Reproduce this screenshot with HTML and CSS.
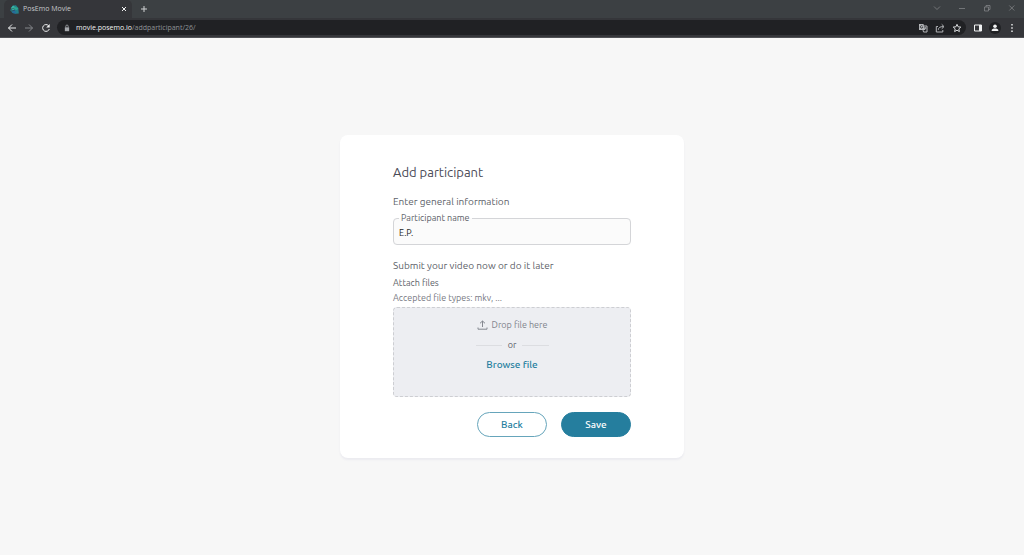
FILE: index.html
```html
<!DOCTYPE html>
<html lang="en">
<head>
<meta charset="utf-8">
<meta name="viewport" content="width=device-width, initial-scale=1">
<title>PosEmo Movie</title>
<link rel="stylesheet" href="styles.css">
</head>
<body>
<header class="browser">
  <div class="tabs">
    <div class="tab">
      <svg class="favicon" viewBox="0 0 9 9"><path d="M3 .5 6 .3 8.3 3 8.8 8.5 6 8.7 2.5 8 .3 5.5 1 3Z" fill="#22808b"/><path d="M3 .5 5 2 4.8 4.5 2.5 5.5 1 3Z" fill="#36b5a5"/><path d="M5 2 8.3 3 7 5 4.8 4.5Z" fill="#2ca88d"/><path d="M2.5 5.5 4.8 4.5 6 8.7 2.5 8Z" fill="#276b9b"/><path d="M.8 4.2 4.7 3M1 6.2 5 5" stroke="#35363a" stroke-width=".5"/></svg>
      <span class="tab-title">PosEmo Movie</span>
      <button class="icon-btn bright" aria-label="Close tab"><svg viewBox="0 0 10 10"><path d="m3 3 4 4m0-4-4 4"/></svg></button>
    </div>
    <button class="icon-btn new-tab" aria-label="New tab"><svg viewBox="0 0 10 10"><path d="M5 2v6M2 5h6"/></svg></button>
    <div class="window-controls">
      <button class="icon-btn" aria-label="Search tabs"><svg viewBox="0 0 10 10"><path d="m2 3.5 3 3 3-3"/></svg></button>
      <button class="icon-btn" aria-label="Minimize"><svg viewBox="0 0 10 10"><path d="M2 5.5h6"/></svg></button>
      <button class="icon-btn" aria-label="Restore"><svg viewBox="0 0 10 10"><path d="M2.5 4h4v4h-4zM4 4V2.5h4v4H6.500"/></svg></button>
      <button class="icon-btn" aria-label="Close window"><svg viewBox="0 0 10 10"><path d="m2.300 2.500 5 5m0-5-5 5"/></svg></button>
    </div>
  </div>
  <div class="toolbar">
    <div class="nav">
      <button class="icon-btn bright" aria-label="Go back"><svg viewBox="0 0 10 10"><path d="M9 5H1.500M5 1.500 1.500 5 5 8.500"/></svg></button>
      <button class="icon-btn dim" aria-label="Go forward"><svg viewBox="0 0 10 10"><path d="M1 5h7.500M5 1.500 8.500 5 5 8.500"/></svg></button>
      <button class="icon-btn bright" aria-label="Reload"><svg viewBox="0 0 10 10"><path d="M7.500 2.600A3.400 3.400 0 1 0 8.300 6"/><path class="solid" d="M8.700 1v3.500H5.200z"/></svg></button>
    </div>
    <div class="address">
      <svg class="lock" viewBox="0 0 10 10"><path d="M2.300 4.200h5.400V9H2.300z" fill="#a5a8ac"/><path d="M3.500 4.500V2.800a1.500 1.500 0 0 1 3 0v1.700" fill="none" stroke="#a5a8ac"/></svg>
      <span class="url"><span class="host">movie.posemo.io</span>/addparticipant/26/</span>
      <button class="icon-btn" aria-label="Translate"><svg viewBox="0 0 10 10"><path class="solid" d="M1 1h4.500l1.500 6H1z"/><path d="M6 3h3v6H5.500L5 7M6.300 5h2M7.500 4.500 6.500 7"/><path d="M4.600 3.100a1.300 1.300 0 1 0 .2 1.200H3.700" stroke="#202124" stroke-width=".7"/></svg></button>
      <button class="icon-btn" aria-label="Share"><svg viewBox="0 0 10 10"><path d="M3 3.500H1.300V9h6.500V7M3.300 6.800C3.500 4.500 5 3.600 8.500 3.600M6.700 1.300 9 3.600 6.700 5.800"/></svg></button>
      <button class="icon-btn star" aria-label="Bookmark"><svg viewBox="0 0 10 10"><path d="m5 1.300 1.100 2.500 2.700.3-2 1.800.6 2.700L5 7.200 2.600 8.600l.6-2.700-2-1.800 2.700-.3z"/></svg></button>
    </div>
    <div class="actions">
      <button class="icon-btn bright" aria-label="Side panel"><svg viewBox="0 0 10 10"><path d="M1.500 2h7v6h-7z"/><path class="solid" d="M6 2h3v6H6z"/></svg></button>
      <button class="icon-btn avatar" aria-label="Profile"><svg viewBox="0 0 10 10"><circle class="solid" cx="5" cy="3.300" r="1.800"/><path class="solid" d="M1.700 8V7c0-1 1.600-1.600 3.300-1.600S8.300 6 8.300 7v1z"/></svg></button>
      <button class="icon-btn bright" aria-label="Menu"><svg viewBox="0 0 10 10"><path class="solid" d="M4.300 1h1.400v1.400H4.300zM4.300 4.300h1.400v1.400H4.300zM4.300 7.600h1.400V9H4.300z"/></svg></button>
    </div>
  </div>
</header>
<main class="page">
  <form class="card">
    <h1 class="title">Add participant</h1>
    <h2 class="section">Enter general information</h2>
    <fieldset class="field">
      <legend class="field-legend"><label for="name">Participant name</label></legend>
      <input class="field-input" id="name" type="text" value="E.P.">
    </fieldset>
    <h2 class="section">Submit your video now or do it later</h2>
    <h3 class="attach">Attach files</h3>
    <p class="hint">Accepted file types: mkv, ...</p>
    <div class="dropzone">
      <div class="drop">
        <svg class="upload" viewBox="0 0 11 10"><path d="M5.500 7V1M3 3.300 5.500 1 8 3.300M1 7.500v1.700h9V7.500" fill="none" stroke="#858890"/></svg>
        <span>Drop file here</span>
      </div>
      <div class="or">or</div>
      <button class="browse" type="button">Browse file</button>
    </div>
    <div class="buttons">
      <button class="btn" type="button">Back</button>
      <button class="btn primary" type="submit">Save</button>
    </div>
  </form>
</main>
</body>
</html>
```
FILE: styles.css
```css
* { box-sizing: border-box; }
body {
  margin: 0;
  min-height: 100vh;
  display: flex;
  flex-direction: column;
  background: #f7f7f7;
  color: #5d5f69;
  font-family: Ubuntu, "Noto Sans", sans-serif;
  font-size: 9px;
  line-height: 12px;
}
button { font: inherit; border: 0; padding: 0; background: none; cursor: pointer; }

.browser { background: #35363a; border-bottom: 1px solid #505155; font-family: "Open Sans", sans-serif; font-size: 7px; }
.tabs { display: flex; align-items: center; height: 18px; background: #3c4043; padding-left: 4px; }
.tab {
  display: flex;
  align-items: center;
  gap: 4px;
  width: 128px;
  height: 18px;
  padding: 0 3px 0 6px;
  background: #35363a;
  border-radius: 5px 5px 0 0;
  color: #c6c8cb;
}
.favicon { width: 9px; height: 9px; }
.tab-title { flex: 1; }
.icon-btn { display: flex; width: 10px; height: 10px; flex: none; color: #b3b5b8; }
.icon-btn svg { width: 10px; height: 10px; fill: none; stroke: currentColor; stroke-width: 1; }
.icon-btn .solid { fill: currentColor; stroke: none; }
.bright { color: #f1f2f3; }
.dim { color: #85878b; }
.new-tab { margin-left: 7px; color: #d0d2d4; }
.window-controls { display: flex; gap: 15px; margin-left: auto; padding: 0 7px 3px 0; }
.window-controls .icon-btn { color: #898c8f; }
.window-controls svg { stroke-width: 0.7; }
.toolbar { display: flex; align-items: center; height: 19px; padding: 0 7px; }
.nav { display: flex; gap: 7px; }
.address {
  flex: 1;
  display: flex;
  align-items: center;
  gap: 7px;
  height: 15px;
  margin-left: 6px;
  padding: 0 4px 0 6px;
  border-radius: 8px;
  background: #202124;
}
.lock { width: 8px; height: 8px; }
.url { flex: 1; margin-left: -2px; color: #8f9296; }
.host { color: #f0f1f2; }
.star { color: #d8dadc; }
.actions { display: flex; align-items: center; gap: 6px; margin-left: 7px; }
.avatar { width: 12px; height: 12px; align-items: center; justify-content: center; border-radius: 50%; background: #202124; color: #f1f2f3; }

.page { flex: 1; display: flex; align-items: center; justify-content: center; }
.card {
  width: 100%;
  max-width: 344px;
  padding: 28px 53px 21px;
  border-radius: 8px;
  background: #fff;
  box-shadow: 0 2px 2px #ebebf0;
}
h1, h2, h3, p { margin: 0; }
.title { font-size: 13px; line-height: 18px; font-weight: 400; color: #4a4b57; }
.section { margin-top: 15px; font-size: 10px; line-height: 12px; font-weight: 400; }
.field {
  min-width: 0;
  margin: 4px 0 0;
  padding: 0 5px 2px;
  border: 1px solid #d4d5d8;
  border-radius: 4px;
  background: #fbfbfb;
}
.field-legend { padding: 0 2px; font-size: 9px; line-height: 12px; }
.field-input { display: block; width: 100%; height: 18px; border: 0; padding: 0; outline: 0; background: none; font: inherit; font-size: 9px; color: #222; }
.attach { margin-top: 5px; font-size: 9px; line-height: 12px; font-weight: 400; }
.hint { margin-top: 3px; font-size: 9px; line-height: 12px; color: #777983; }
.dropzone {
  display: flex;
  flex-direction: column;
  align-items: center;
  gap: 8px;
  margin-top: 3px;
  padding: 11px 0 25px;
  border: 1px dashed #cdced2;
  border-radius: 4px;
  background: #edeef2;
}
.drop { display: flex; align-items: center; gap: 4px; font-size: 9px; color: #80838c; }
.upload { width: 11px; height: 10px; }
.or { display: flex; align-items: center; gap: 6px; width: 73px; font-size: 9px; }
.or::before, .or::after { content: ""; flex: 1; height: 1px; background: #dcdde1; }
.browse { color: #257e9e; font-size: 10px; font-weight: 500; line-height: 12px; }
.buttons { display: flex; justify-content: flex-end; gap: 14px; margin-top: 15px; }
.btn { width: 70px; height: 25px; border: 1px solid #66a5bb; border-radius: 13px; color: #257e9e; font-size: 10px; font-weight: 500; }
.primary { background: #257e9e; border-color: #257e9e; color: #fff; }
```
